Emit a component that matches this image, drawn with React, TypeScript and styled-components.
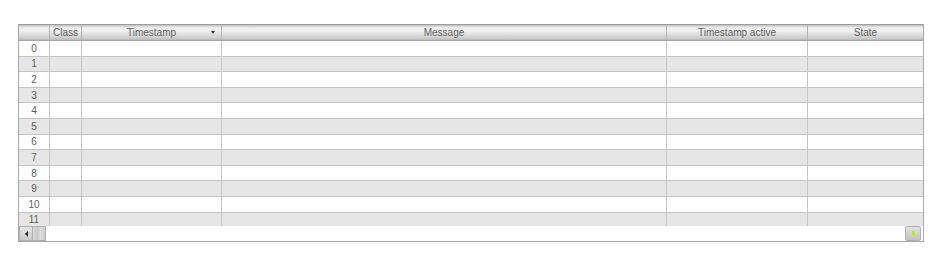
import React from "react";
import styled, { createGlobalStyle } from "styled-components";

const Global = createGlobalStyle`
  html, body { margin: 0; padding: 0; background: #ffffff; }
  body { font-family: "Liberation Sans", Arial, sans-serif; }
`;

const Page = styled.div`
  padding: 24px 0 0 18px;
  width: 940px;
  height: 274px;
  box-sizing: border-box;
`;

const Grid = styled.div`
  width: 906px;
  border: 1px solid #a9a9a9;
  border-top-color: #9c9c9c;
  box-sizing: border-box;
  background: #fff;
`;

const COLS = "31px 32px 140px 445px 141px 1fr";

const HeaderRow = styled.div`
  display: grid;
  grid-template-columns: ${COLS};
  height: 15px;
  background: linear-gradient(
    to bottom,
    #bdbdbd 0%,
    #e9e9e9 15%,
    #f3f3f3 35%,
    #dcdcdc 65%,
    #cfcfcf 85%,
    #b9b9b9 100%
  );
  border-bottom: 1px solid #a6a6a6;
`;

const HeaderCell = styled.div`
  position: relative;
  display: flex;
  align-items: center;
  justify-content: center;
  font-size: 10px;
  color: #626262;
  border-right: 1px solid #b4b4b4;
  white-space: nowrap;
  &:last-child { border-right: none; }
`;

const SortArrow = styled.span`
  position: absolute;
  right: 6px;
  top: 6px;
  width: 0;
  height: 0;
  border-left: 2.5px solid transparent;
  border-right: 2.5px solid transparent;
  border-top: 3px solid #333;
`;

const Body = styled.div`
  height: 185px;
  overflow: hidden;
`;

const Row = styled.div<{ $odd: boolean }>`
  display: grid;
  grid-template-columns: ${COLS};
  height: 15.6px;
  box-sizing: border-box;
  background: ${(p) => (p.$odd ? "#e6e6e6" : "#ffffff")};
  border-bottom: 1px solid #c4c4c4;
`;

const Cell = styled.div`
  border-right: 1px solid #c6c6c6;
  &:last-child { border-right: none; }
`;

const NumCell = styled(Cell)`
  display: flex;
  align-items: center;
  justify-content: center;
  font-size: 10px;
  color: #5e5e5e;
`;

const ScrollBar = styled.div`
  display: flex;
  align-items: stretch;
  height: 15px;
  background: #fff;
`;

const ScrollBtn = styled.div`
  width: 14px;
  box-sizing: border-box;
  display: flex;
  align-items: center;
  justify-content: center;
  background: linear-gradient(to bottom, #e6e6e6, #c9c9c9);
  border: 1px solid #b0b0b0;
`;

const LeftArrow = styled.span`
  width: 0;
  height: 0;
  border-top: 3px solid transparent;
  border-bottom: 3px solid transparent;
  border-right: 3px solid #222;
`;

const Thumb = styled.div`
  width: 13px;
  box-sizing: border-box;
  background: linear-gradient(to right, #d8d8d8, #c8c8c8 40%, #dedede 60%, #cbcbcb);
  border: 1px solid #b0b0b0;
  border-left: none;
`;

const Track = styled.div`
  flex: 1;
`;

const RightBtn = styled(ScrollBtn)`
  width: 16px;
  margin-right: 2px;
  border-radius: 2px;
  background: linear-gradient(to bottom, #e2e2e2, #c2c2c2);
`;

const GreenDot = styled.span`
  width: 3px;
  height: 5px;
  border-radius: 1px;
  background: #b6ea3a;
  box-shadow: 0 0 2px #d5ff70;
`;

const headers = ["", "Class", "Timestamp", "Message", "Timestamp active", "State"];

export default function App() {
  return (
    <>
      <Global />
      <Page>
        <Grid>
          <HeaderRow>
            {headers.map((h, i) => (
              <HeaderCell key={i}>
                {h}
                {h === "Timestamp" && <SortArrow />}
              </HeaderCell>
            ))}
          </HeaderRow>
          <Body>
            {Array.from({ length: 12 }, (_, i) => (
              <Row key={i} $odd={i % 2 === 1}>
                <NumCell>{i}</NumCell>
                <Cell />
                <Cell />
                <Cell />
                <Cell />
                <Cell />
              </Row>
            ))}
          </Body>
          <ScrollBar>
            <ScrollBtn>
              <LeftArrow />
            </ScrollBtn>
            <Thumb />
            <Track />
            <RightBtn>
              <GreenDot />
            </RightBtn>
          </ScrollBar>
        </Grid>
      </Page>
    </>
  );
}
